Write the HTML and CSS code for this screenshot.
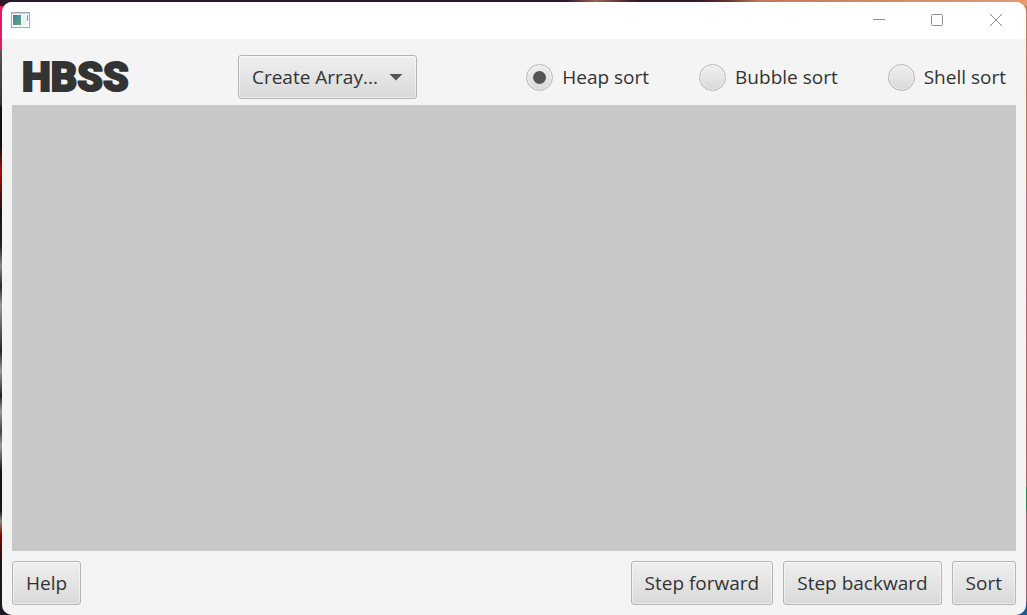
FILE: index.html
```html
<!DOCTYPE html>
<html lang="en">
<head>
<meta charset="utf-8">
<meta name="viewport" content="width=device-width, initial-scale=1">
<title>HBSS</title>
<link rel="stylesheet" href="styles.css">
</head>
<body>
<div class="window">
  <div class="titlebar">
    <svg class="app-icon" width="19" height="16" viewBox="0 0 19 16" aria-hidden="true">
      <defs><linearGradient id="pane" x2="1" y2="1"><stop offset="0" stop-color="#4580aa"/><stop offset="1" stop-color="#5bab78"/></linearGradient></defs>
      <rect x=".5" y=".5" width="18" height="15" fill="#fff" stroke="#a4a9b3"/>
      <path d="M1 1.500h17" stroke="#c9ced6"/>
      <rect x="2" y="3" width="8" height="10" fill="url(#pane)"/>
      <rect x="11" y="3" width="4" height="10" fill="#edf1f1"/>
      <rect x="16" y="3" width="1" height="6" fill="#56a487"/>
    </svg>
    <div class="caption-buttons">
      <button class="caption-button" type="button" aria-label="Minimize"><svg width="14" height="14" viewBox="0 0 14 14"><path d="M1 6.500h12"/></svg></button>
      <button class="caption-button" type="button" aria-label="Maximize"><svg width="14" height="14" viewBox="0 0 14 14"><rect x="1.500" y="1.500" width="11" height="11" rx="1"/></svg></button>
      <button class="caption-button" type="button" aria-label="Close"><svg width="14" height="14" viewBox="0 0 14 14"><path d="M2 1l12 12M14 1L2 13"/></svg></button>
    </div>
  </div>
  <header class="toolbar">
    <h1 class="logo">HBSS</h1>
    <div class="select">
      <select class="control" aria-label="Create Array"><option>Create Array...</option></select>
      <span class="select-arrow"></span>
    </div>
    <div class="choices" role="radiogroup" aria-label="Algorithm">
      <label class="choice"><input class="radio" type="radio" name="sort" checked>Heap sort</label>
      <label class="choice"><input class="radio" type="radio" name="sort">Bubble sort</label>
      <label class="choice"><input class="radio" type="radio" name="sort">Shell sort</label>
    </div>
  </header>
  <main class="canvas"></main>
  <footer class="actions">
    <button class="control help" type="button">Help</button>
    <button class="control" type="button">Step forward</button>
    <button class="control" type="button">Step backward</button>
    <button class="control" type="button">Sort</button>
  </footer>
</div>
</body>
</html>
```
FILE: styles.css
```css
* {
  box-sizing: border-box;
}

body {
  display: flex;
  min-height: 100vh;
  margin: 0;
  padding: 2px 1px 0 2px;
  color: #333;
  font: 19px/26px "Open Sans", "Noto Sans", sans-serif;
  background:
    linear-gradient(#e31b62 44px, #55565b 44px, #333 98px, #111 102px, #111 140px, #a80c12 165px, #151515 205px, #222 240px, #888 260px, #292929 280px, #999 300px, #252525 345px, #999 365px, #222 390px, #999 405px, #444 425px, #999 440px, #151515 465px, #151515 505px, #888 515px, #800 530px, #181818 555px, #211622) 0 6px / 10px 100% no-repeat,
    linear-gradient(#c97c62, #a96363 480px, #168751 482px, #168751 500px, #96646c 508px, #96646c 590px, #1e5796 600px) 100% 6px / 10px 100% no-repeat,
    linear-gradient(90deg, #2b1829 0 55%, #9c6058 58%, #321925 62%, #321925 68%, #673639 71%, #c77760 74%, #e29a70);
}

.window {
  display: flex;
  flex: 1;
  flex-direction: column;
  overflow: hidden;
  background: #f4f4f4;
  border-radius: 10px;
}

.titlebar {
  display: flex;
  align-items: center;
  justify-content: space-between;
  height: 37px;
  padding: 0 2px 2px 9px;
  background: #fff;
}

.caption-buttons {
  display: flex;
}

.caption-button {
  display: grid;
  place-items: center;
  width: 58px;
  height: 34px;
  padding: 0;
  background: none;
  border: 0;
}

.caption-button svg {
  fill: none;
  stroke: #8e8e8e;
}

.toolbar {
  display: flex;
  align-items: center;
  justify-content: space-between;
  height: 66px;
  padding: 10px 20px 0;
}

.logo {
  margin: 0;
  font: 900 41px/44px Roboto, sans-serif;
  -webkit-text-stroke: 2px #333;
}

.control {
  height: 44px;
  padding: 0 13px;
  color: inherit;
  font: inherit;
  background: linear-gradient(#efefef, #d9d9d9);
  border: 1px solid #b5b5b5;
  border-radius: 3px;
  box-shadow: inset 0 0 0 1px #ffffff80;
}

.select {
  display: grid;
  align-items: center;
}

.select > * {
  grid-area: 1 / 1;
}

.select .control {
  appearance: none;
  width: 179px;
}

.select-arrow {
  justify-self: end;
  width: 14px;
  height: 7px;
  margin-right: 14px;
  background: #555;
  clip-path: polygon(0 0, 100% 0, 50% 100%);
  pointer-events: none;
}

.choices {
  display: flex;
  gap: 50px;
}

.choice {
  display: flex;
  align-items: center;
  gap: 9px;
}

.radio {
  appearance: none;
  display: grid;
  place-items: center;
  width: 27px;
  height: 27px;
  margin: 0;
  background: linear-gradient(#efefef, #d9d9d9);
  border: 1px solid #b5b5b5;
  border-radius: 50%;
  box-shadow: inset 0 0 0 1px #ffffff80;
}

.radio:checked::before {
  content: "";
  width: 13px;
  height: 13px;
  background: #555;
  border-radius: 50%;
}

.canvas {
  flex: 1;
  margin: 0 10px;
  background: #c8c8c8;
}

.actions {
  display: flex;
  gap: 10px;
  padding: 10px;
}

.help {
  margin-right: auto;
}
```
